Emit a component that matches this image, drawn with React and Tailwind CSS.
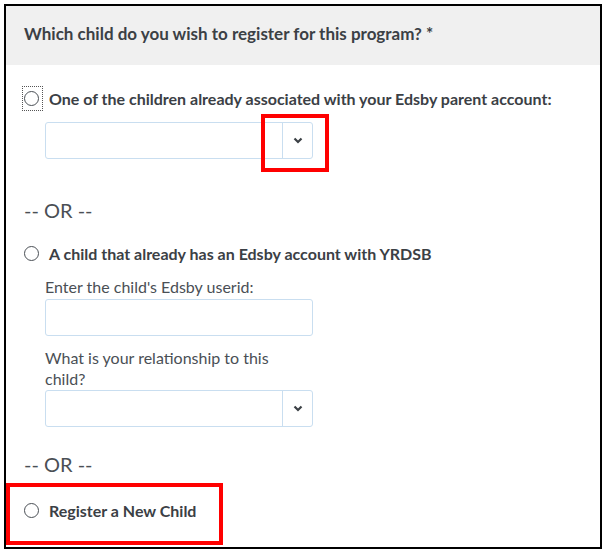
import React from "react";

const Radio = ({ focused }) => (
  <span
    className={
      "flex items-center pl-[2px] w-[21px] h-[25px] shrink-0 " +
      (focused ? "outline outline-1 outline-dotted outline-[#555] -outline-offset-1" : "")
    }
  >
    <span className="w-[15px] h-[15px] rounded-full border border-[#4a4f55] bg-white" />
  </span>
);

const Chevron = () => (
  <svg width="10" height="7" viewBox="0 0 10 7">
    <polyline points="1.5,1.5 5,5 8.5,1.5" fill="none" stroke="#3b4045" strokeWidth="2.2" />
  </svg>
);

const SelectBox = () => (
  <div className="flex w-[268px] h-[37px] rounded-[3px] border border-[#c9def0] bg-white">
    <div className="flex-1" />
    <div className="w-[30px] flex items-center justify-center border-l border-[#c9def0]">
      <Chevron />
    </div>
  </div>
);

export default function App() {
  return (
    <div
      className="relative w-[606px] h-[553px] bg-white p-[4px] text-[#3b4045]"
      style={{ fontFamily: "Lato, 'Open Sans', sans-serif" }}
    >
      <div className="w-[598px] h-[545px] border-2 border-black flex flex-col">
        <div className="h-[59px] bg-[#f0f0f0] flex items-center pl-[18px] pb-[4px] text-[17px] font-bold">
          Which child do you wish to register for this program? *
        </div>

        <div className="pl-[16px] flex flex-col">
          <div className="mt-[21px] flex items-center">
            <Radio focused />
            <span className="ml-[6px] text-[16px] font-bold leading-[22px]">
              One of the children already associated with your Edsby parent account:
            </span>
          </div>
          <div className="mt-[11px] ml-[23px]">
            <SelectBox />
          </div>

          <div className="mt-[39px] ml-[2px] text-[20px] leading-[24px] text-[#4a4f55]">-- OR --</div>

          <div className="mt-[19px] flex items-center">
            <Radio />
            <span className="ml-[6px] text-[16px] font-bold leading-[22px]">
              A child that already has an Edsby account with YRDSB
            </span>
          </div>

          <div className="ml-[23px] flex flex-col">
            <div className="mt-[11px] text-[16px] leading-[20px] text-[#4a4f55]">Enter the child's Edsby userid:</div>
            <div className="mt-[2px] w-[268px] h-[37px] rounded-[3px] border border-[#c9def0] bg-white" />
            <div className="mt-[11px] w-[240px] text-[16px] leading-[21px] text-[#4a4f55]">
              What is your relationship to this child?
            </div>
            <div className="mt-[1px]">
              <SelectBox />
            </div>
          </div>

          <div className="mt-[25px] ml-[2px] text-[20px] leading-[24px] text-[#4a4f55]">-- OR --</div>

          <div className="mt-[22px] flex items-center">
            <Radio />
            <span className="ml-[6px] text-[16px] font-bold leading-[22px]">Register a New Child</span>
          </div>
        </div>
      </div>

      <div className="absolute left-[261px] top-[114px] w-[68px] h-[58px] border-4 border-[#ff0000]" />
      <div className="absolute left-[6px] top-[483px] w-[217px] h-[62px] border-4 border-[#ff0000]" />
    </div>
  );
}
